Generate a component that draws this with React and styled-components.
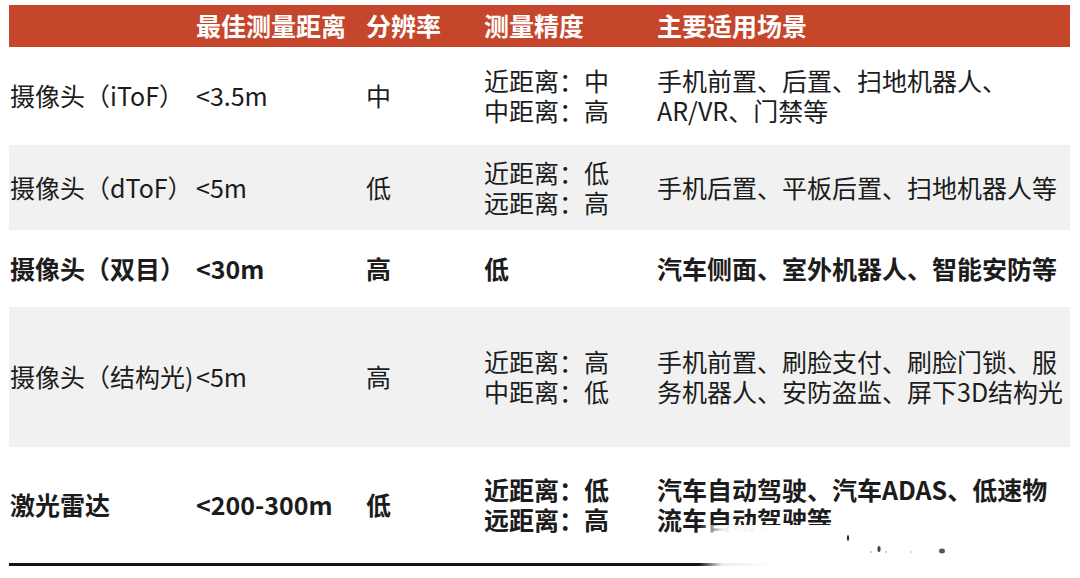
import React from "react";
import styled, { createGlobalStyle } from "styled-components";

const GlobalStyle = createGlobalStyle`
  html, body {
    margin: 0;
    padding: 0;
    background: #fff;
  }
  body {
    font-family: "Noto Sans CJK SC", "Noto Sans", sans-serif;
    color: #1c1c1c;
  }
`;

const Page = styled.div`
  width: 1080px;
  height: 578px;
  padding: 5px 0 0 9px;
  box-sizing: border-box;
  overflow: hidden;
`;

const Table = styled.div`
  position: relative;
  width: 1061px;
`;

const Row = styled.div`
  display: grid;
  grid-template-columns: 186px 170px 118px 173px 1fr;
  padding-left: 1px;
  height: ${(p) => p.h}px;
  background: ${(p) => (p.shade ? "#f1f1f1" : "#fff")};
  font-size: 25px;
  line-height: 30px;
  font-weight: ${(p) => p.weight || 400};
`;

const HeadRow = styled(Row)`
  background: #c5462b;
  color: #fff;
  font-weight: 700;
`;

const Cell = styled.div`
  display: flex;
  flex-direction: column;
  justify-content: center;
  white-space: nowrap;
  padding-bottom: 2px;
`;

const BottomRule = styled.div`
  height: 3px;
  background: linear-gradient(to right, #141414 0%, #141414 85%, rgba(20, 20, 20, 0.5) 94%, rgba(255, 255, 255, 0) 98%);
`;

const Smudge = styled.div`
  position: absolute;
  left: 690px;
  top: 520px;
  width: 380px;
  height: 42px;
  background: linear-gradient(to right, rgba(255, 255, 255, 0) 0%, rgba(255, 255, 255, 0.92) 6%, #fff 20%);
  svg {
    display: block;
  }
`;

const rows = [
  {
    h: 98,
    cells: ["摄像头（iToF）", "<3.5m", "中", ["近距离：中", "中距离：高"], ["手机前置、后置、扫地机器人、", "AR/VR、门禁等"]],
  },
  {
    h: 85,
    shade: true,
    cells: ["摄像头（dToF）", "<5m", "低", ["近距离：低", "远距离：高"], ["手机后置、平板后置、扫地机器人等"]],
  },
  {
    h: 77,
    weight: 700,
    cells: ["摄像头（双目）", "<30m", "高", ["低"], ["汽车侧面、室外机器人、智能安防等"]],
  },
  {
    h: 140,
    shade: true,
    cells: ["摄像头（结构光)", "<5m", "高", ["近距离：高", "中距离：低"], ["手机前置、刷脸支付、刷脸门锁、服", "务机器人、安防盗监、屏下3D结构光"]],
  },
  {
    h: 116,
    weight: 700,
    cells: ["激光雷达", "<200-300m", "低", ["近距离：低", "远距离：高"], ["汽车自动驾驶、汽车ADAS、低速物", "流车自动驾驶等"]],
  },
];

const headers = ["", "最佳测量距离", "分辨率", "测量精度", "主要适用场景"];

export default function App() {
  return (
    <Page>
      <GlobalStyle />
      <Table>
        <HeadRow h={42}>
          {headers.map((t, i) => (
            <Cell key={i}>{t}</Cell>
          ))}
        </HeadRow>
        {rows.map((r, i) => (
          <Row key={i} h={r.h} shade={r.shade} weight={r.weight}>
            {r.cells.map((c, j) => (
              <Cell key={j}>
                {Array.isArray(c) ? c.map((line, k) => <span key={k}>{line}</span>) : c}
              </Cell>
            ))}
          </Row>
        ))}
        <BottomRule />
        <Smudge>
          <svg width="380" height="42" viewBox="0 0 380 42">
            <ellipse cx="149" cy="13" rx="1.2" ry="3" fill="#333" />
            <ellipse cx="180" cy="24" rx="1.6" ry="3" fill="#444" />
            <ellipse cx="172" cy="27" rx="0.8" ry="0.8" fill="#999" />
            <ellipse cx="187" cy="27" rx="0.8" ry="0.8" fill="#999" />
            <ellipse cx="212" cy="27" rx="0.8" ry="0.8" fill="#aaa" />
            <ellipse cx="243" cy="26" rx="3" ry="2.5" fill="#555" />
          </svg>
        </Smudge>
      </Table>
    </Page>
  );
}
